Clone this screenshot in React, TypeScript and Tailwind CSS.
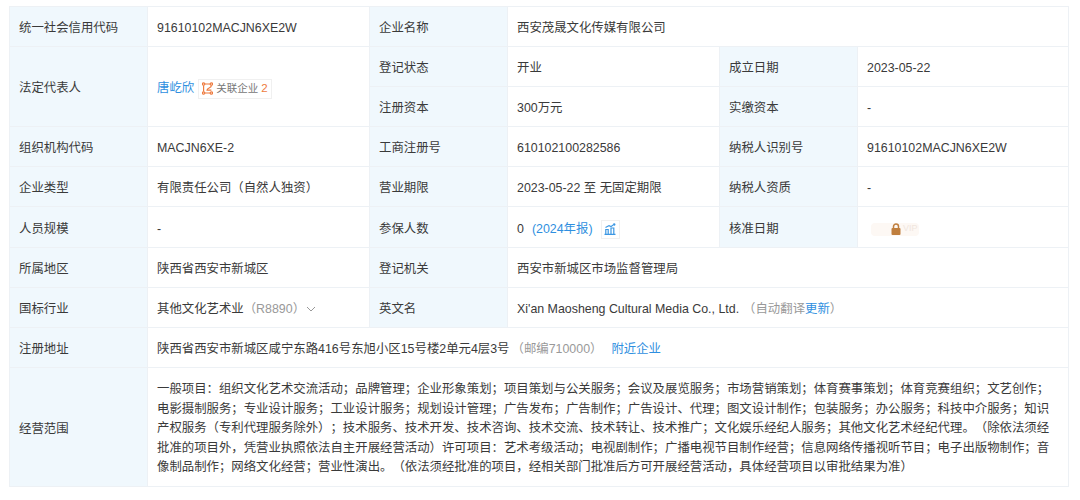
const L = "bg-[#f0f8fd] border border-[#edf1f5] pl-[9px] pr-2 pt-[4px] align-middle font-normal text-left";
const V = "border border-[#edf1f5] pl-[9px] pr-2 pt-[4px] align-middle";

function Lbl({ children, rowSpan }: { children: React.ReactNode; rowSpan?: number }) {
  return <th rowSpan={rowSpan} className={L}>{children}</th>;
}
function Val({ children, colSpan, rowSpan }: { children: React.ReactNode; colSpan?: number; rowSpan?: number }) {
  return <td colSpan={colSpan} rowSpan={rowSpan} className={V}>{children}</td>;
}

function RelIcon() {
  return (
    <svg width="11" height="13" viewBox="0 0 11 13" fill="none" stroke="#ee7b3f" strokeWidth="1.2">
      <circle cx="1.6" cy="2" r="1.2" />
      <circle cx="9.4" cy="2" r="1.2" />
      <circle cx="1.6" cy="11" r="1.2" />
      <circle cx="9.4" cy="11" r="1.2" />
      <path d="M3 2H8M1.6 3.4V9.6M3 11H8M9.4 3.4C9.4 6.5 5 5.5 5 8.2H9.4" />
    </svg>
  );
}

function ChartIcon() {
  return (
    <svg width="12" height="12" viewBox="0 0 12 12" fill="none" stroke="#3b97e3" strokeWidth="1.2">
      <path d="M0.5 11.4H11.5M1.8 11V6.5H4.2V11M7 11V5H9.8V11" />
      <path d="M1.5 4.6L5 2.6L7 3.6L9 2" />
      <circle cx="10.2" cy="1.5" r="1.2" fill="#3b97e3" stroke="none" />
    </svg>
  );
}

export default function App() {
  return (
    <div className="w-[1080px] h-[500px] overflow-hidden bg-white pt-[6px] pl-[9px] text-[12.4px] text-[#3a3a3a] [text-spacing-trim:space-all] font-['Liberation_Sans','Noto_Sans_CJK_SC',sans-serif]">
      <table className="w-[1059px] table-fixed border-collapse">
        <colgroup>
          <col className="w-[138px]" />
          <col className="w-[222px]" />
          <col className="w-[138px]" />
          <col className="w-[212px]" />
          <col className="w-[138px]" />
          <col className="w-[211px]" />
        </colgroup>
        <tbody>
          <tr className="h-[40px]">
            <Lbl>统一社会信用代码</Lbl>
            <Val>91610102MACJN6XE2W</Val>
            <Lbl>企业名称</Lbl>
            <Val colSpan={3}>西安茂晟文化传媒有限公司</Val>
          </tr>
          <tr className="h-[40px]">
            <Lbl rowSpan={2}>法定代表人</Lbl>
            <Val rowSpan={2}>
              <div className="flex items-center">
                <span className="text-[#2f8fe0]">唐屹欣</span>
                <span className="ml-[4px] flex h-[20px] items-center gap-[3px] border border-[#f0f0f0] px-[3px] text-[10.5px] text-[#777]">
                  <RelIcon />
                  关联企业
                  <span className="text-[#ee7b3f] text-[11.5px]">2</span>
                </span>
              </div>
            </Val>
            <Lbl>登记状态</Lbl>
            <Val>开业</Val>
            <Lbl>成立日期</Lbl>
            <Val>2023-05-22</Val>
          </tr>
          <tr className="h-[40px]">
            <Lbl>注册资本</Lbl>
            <Val>300万元</Val>
            <Lbl>实缴资本</Lbl>
            <Val>-</Val>
          </tr>
          <tr className="h-[40px]">
            <Lbl>组织机构代码</Lbl>
            <Val>MACJN6XE-2</Val>
            <Lbl>工商注册号</Lbl>
            <Val>610102100282586</Val>
            <Lbl>纳税人识别号</Lbl>
            <Val>91610102MACJN6XE2W</Val>
          </tr>
          <tr className="h-[40px]">
            <Lbl>企业类型</Lbl>
            <Val>有限责任公司（自然人独资）</Val>
            <Lbl>营业期限</Lbl>
            <Val>2023-05-22 至 无固定期限</Val>
            <Lbl>纳税人资质</Lbl>
            <Val>-</Val>
          </tr>
          <tr className="h-[41px]">
            <Lbl>人员规模</Lbl>
            <Val>-</Val>
            <Lbl>参保人数</Lbl>
            <Val>
              <div className="flex items-center">
                <span>0</span>
                <span className="ml-[8px] text-[#2f8fe0]">(2024年报)</span>
                <span className="ml-[8px] flex h-[19px] w-[19px] items-center justify-center border border-[#f0f0f0]">
                  <ChartIcon />
                </span>
              </div>
            </Val>
            <Lbl>核准日期</Lbl>
            <Val>
              <div className="ml-[4px] flex h-[13px] w-[48px] items-center rounded-sm bg-[#fdf8f4] pl-[20px]">
                <svg width="10" height="12" viewBox="0 0 10 12" className="shrink-0">
                  <path d="M2.5 5V3.5a2.5 2.5 0 0 1 5 0V5" fill="none" stroke="#c07f3e" strokeWidth="1.5" />
                  <rect x="0.5" y="5" width="9" height="7" rx="1" fill="#c07f3e" />
                </svg>
                <span className="ml-[2px] text-[9px] text-[#f0e6de]">VIP</span>
              </div>
            </Val>
          </tr>
          <tr className="h-[40px]">
            <Lbl>所属地区</Lbl>
            <Val>陕西省西安市新城区</Val>
            <Lbl>登记机关</Lbl>
            <Val colSpan={3}>西安市新城区市场监督管理局</Val>
          </tr>
          <tr className="h-[40px]">
            <Lbl>国标行业</Lbl>
            <Val>
              <div className="flex items-center">
                <span>其他文化艺术业</span>
                <span className="text-[#999]">（R8890）</span>
                <svg width="10" height="6" viewBox="0 0 10 6" fill="none" stroke="#999" className="ml-[1px]">
                  <path d="M1 1L5 5L9 1" />
                </svg>
              </div>
            </Val>
            <Lbl>英文名</Lbl>
            <Val colSpan={3}>
              Xi'an Maosheng Cultural Media Co., Ltd.
              <span className="ml-[4px] text-[#999]">（自动翻译</span>
              <span className="text-[#2f8fe0]">更新</span>
              <span className="text-[#999]">）</span>
            </Val>
          </tr>
          <tr className="h-[40px]">
            <Lbl>注册地址</Lbl>
            <Val colSpan={5}>
              陕西省西安市新城区咸宁东路416号东旭小区15号楼2单元4层3号
              <span className="ml-[2px] text-[#999]">（邮编710000）</span>
              <span className="ml-[9px] text-[#2f8fe0]">附近企业</span>
            </Val>
          </tr>
          <tr className="h-[119px]">
            <Lbl>经营范围</Lbl>
            <Val colSpan={5}>
              <p className="whitespace-nowrap leading-[19.6px]">
                一般项目：组织文化艺术交流活动；品牌管理；企业形象策划；项目策划与公关服务；会议及展览服务；市场营销策划；体育赛事策划；体育竞赛组织；文艺创作；<br />
                电影摄制服务；专业设计服务；工业设计服务；规划设计管理；广告发布；广告制作；广告设计、代理；图文设计制作；包装服务；办公服务；科技中介服务；知识<br />
                产权服务（专利代理服务除外）；技术服务、技术开发、技术咨询、技术交流、技术转让、技术推广；文化娱乐经纪人服务；其他文化艺术经纪代理。（除依法须经<br />
                批准的项目外，凭营业执照依法自主开展经营活动）许可项目：艺术考级活动；电视剧制作；广播电视节目制作经营；信息网络传播视听节目；电子出版物制作；音<br />
                像制品制作；网络文化经营；营业性演出。（依法须经批准的项目，经相关部门批准后方可开展经营活动，具体经营项目以审批结果为准）
              </p>
            </Val>
          </tr>
        </tbody>
      </table>
    </div>
  );
}
